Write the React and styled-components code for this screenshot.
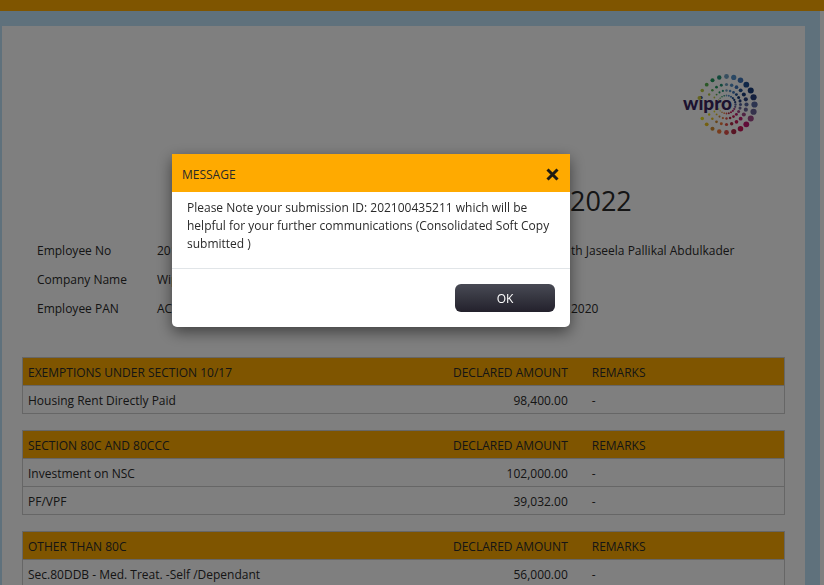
import React from "react";
import styled, { createGlobalStyle } from "styled-components";

const GlobalStyle = createGlobalStyle`
  *, *::before, *::after { box-sizing: border-box; }
  body {
    margin: 0;
    background: #fff;
    color: #2a2a2a;
    font-family: "Open Sans", "Noto Sans", sans-serif;
    font-size: 12px;
    line-height: 18px;
  }
`;

const Page = styled.div`
  display: flex;
  flex-direction: column;
  height: 100vh;
  overflow: hidden;
`;

const TopBar = styled.header`
  flex: none;
  height: 11px;
  background: #ffaa00;
`;

const Backdrop = styled.main`
  display: flex;
  flex: 1;
  min-height: 0;
  margin-right: 4px;
  padding: 15px 15px 0 2px;
  background: #bfe3f9;
`;

const Sheet = styled.div`
  flex: 1;
  min-width: 0;
  padding: 47px 20px 0;
  overflow: hidden;
  background: #fff;
`;

const LogoRow = styled.div`
  display: flex;
  justify-content: flex-end;
  padding-right: 27px;
`;

const Title = styled.h1`
  margin: 46px 0 0;
  padding-left: 548px;
  font-size: 27px;
  line-height: 36px;
  font-weight: 400;
`;

const Details = styled.dl`
  display: grid;
  grid-template-columns: 120px 414px 1fr;
  row-gap: 11px;
  margin: 23px 0 39px;
  padding-left: 15px;
  white-space: nowrap;
`;

const Term = styled.dt`
  grid-column: 1;
`;

const Value = styled.dd`
  margin: 0;
`;

const Table = styled.table`
  width: 100%;
  margin-bottom: 16px;
  table-layout: fixed;
  border-collapse: collapse;
  border: 1px solid #ccc;
`;

const Row = styled.tr`
  height: 28px;
  border-bottom: 1px solid #ccc;
  background: ${(p) => (p.$head ? "#ffaa00" : "transparent")};
`;

const Cell = styled.td`
  width: ${(p) => p.$width};
  padding: ${(p) => (p.$right ? "2px 11px 0 5px" : "2px 5px 0")};
  text-align: ${(p) => (p.$right ? "right" : "left")};
  font-weight: 400;
`;

const RemarkCell = styled(Cell)`
  padding-left: 13px;
`;

const Overlay = styled.div`
  position: fixed;
  inset: 0;
  padding: 154px 16px 16px 172px;
  background: rgba(0, 0, 0, 0.5);
`;

const Dialog = styled.section`
  max-width: 398px;
  overflow: hidden;
  border-radius: 0 0 5px 5px;
  background: #fff;
  box-shadow: 0 5px 15px rgba(0, 0, 0, 0.5);
`;

const DialogHeader = styled.header`
  display: flex;
  align-items: center;
  justify-content: space-between;
  height: 38px;
  padding: 3px 11px 0 10px;
  background: #ffaa00;
`;

const DialogTitle = styled.h2`
  margin: 0;
  font-size: 12px;
  font-weight: 400;
`;

const CloseButton = styled.button`
  display: flex;
  padding: 0;
  border: 0;
  background: none;
  color: #1f1a12;
  cursor: pointer;
`;

const DialogBody = styled.p`
  margin: 0;
  padding: 7px 15px 15px;
  border-bottom: 1px solid #e1e5e8;
`;

const DialogFooter = styled.footer`
  display: flex;
  justify-content: flex-end;
  padding: 15px;
`;

const OkButton = styled.button`
  width: 100px;
  height: 28px;
  padding: 1px 0 0;
  border: 0;
  border-radius: 6px;
  background: linear-gradient(#484a54, #23212c);
  color: #fff;
  font: inherit;
  cursor: pointer;
`;

const dotColors = [
  "#6f9fc0", "#5590c8", "#3f74b8", "#1f4f90", "#173a78", "#26407f",
  "#5868a0", "#6a6598", "#a04a88", "#c01a70", "#c81858", "#b02a48",
  "#e05048", "#f07838", "#d08a30", "#e8c020", "#e8e020", null,
  null, null, "#b8c840", "#58b050", "#20985c", "#259478",
];

const rings = [
  { radius: 28, size: 2.4 },
  { radius: 20, size: 1.6 },
  { radius: 14, size: 1.2 },
  { radius: 9, size: 0.9 },
];

function Logo() {
  return (
    <svg width="76" height="64" viewBox="0 0 76 64" role="img" aria-label="wipro">
      {rings.map(({ radius, size }) =>
        dotColors.map((color, i) => {
          if (!color) return null;
          const angle = (i * Math.PI) / 12;
          const grow = 1 + 0.3 * Math.sin(angle);
          return (
            <circle
              key={`${radius}-${i}`}
              cx={44.5 + radius * Math.sin(angle)}
              cy={31.5 - radius * Math.cos(angle)}
              r={size * grow}
              fill={color}
            />
          );
        })
      )}
      <text x="1" y="37" fill="#38245f" fontFamily="Lato, sans-serif" fontSize="19" fontWeight="900">
        wipro
      </text>
      <circle cx="17.5" cy="25" r="2" fill="#c8c840" />
    </svg>
  );
}

const details = [
  ["Employee No", "201", "th Jaseela Pallikal Abdulkader"],
  ["Company Name", "Wipro", ""],
  ["Employee PAN", "AC", "2020"],
];

const sections = [
  { title: "EXEMPTIONS UNDER SECTION 10/17", rows: [["Housing Rent Directly Paid", "98,400.00"]] },
  {
    title: "SECTION 80C AND 80CCC",
    rows: [["Investment on NSC", "102,000.00"], ["PF/VPF", "39,032.00"]],
  },
  { title: "OTHER THAN 80C", rows: [["Sec.80DDB - Med. Treat. -Self /Dependant", "56,000.00"]] },
];

export default function App() {
  return (
    <Page>
      <GlobalStyle />
      <TopBar />
      <Backdrop>
        <Sheet>
          <LogoRow>
            <Logo />
          </LogoRow>
          <Title>2022</Title>
          <Details>
            {details.map(([term, value, extra]) => (
              <React.Fragment key={term}>
                <Term>{term}</Term>
                <Value>{value}</Value>
                <Value>{extra}</Value>
              </React.Fragment>
            ))}
          </Details>
          {sections.map(({ title, rows }) => (
            <Table key={title}>
              <thead>
                <Row $head>
                  <Cell as="th" scope="col" $width="50%">{title}</Cell>
                  <Cell as="th" scope="col" $width="23%" $right>DECLARED AMOUNT</Cell>
                  <RemarkCell as="th" scope="col" $width="27%">REMARKS</RemarkCell>
                </Row>
              </thead>
              <tbody>
                {rows.map(([label, amount]) => (
                  <Row key={label}>
                    <Cell>{label}</Cell>
                    <Cell $right>{amount}</Cell>
                    <RemarkCell>-</RemarkCell>
                  </Row>
                ))}
              </tbody>
            </Table>
          ))}
        </Sheet>
      </Backdrop>
      <Overlay>
        <Dialog role="dialog" aria-modal="true" aria-labelledby="dialog-title">
          <DialogHeader>
            <DialogTitle id="dialog-title">MESSAGE</DialogTitle>
            <CloseButton type="button" aria-label="Close">
              <svg width="13" height="13" viewBox="0 0 13 13" stroke="currentColor" strokeWidth="3">
                <path d="M1.5 1.5 11.5 11.5M11.5 1.5 1.5 11.5" />
              </svg>
            </CloseButton>
          </DialogHeader>
          <DialogBody>
            Please Note your submission ID: 202100435211 which will be helpful for your further
            communications (Consolidated Soft Copy submitted )
          </DialogBody>
          <DialogFooter>
            <OkButton type="button">OK</OkButton>
          </DialogFooter>
        </Dialog>
      </Overlay>
    </Page>
  );
}
